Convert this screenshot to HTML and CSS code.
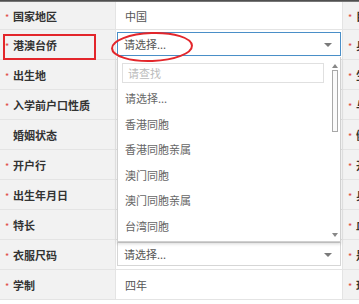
FILE: index.html
```html
<!DOCTYPE html>
<html lang="zh-CN">
<head>
  <meta charset="UTF-8">
  <meta name="viewport" content="width=device-width, initial-scale=1.0">
  <title>学生信息</title>
  <link rel="stylesheet" href="styles.css">
</head>
<body>
  <div class="page">
    <div class="topline"></div>
    <div class="form-table">
      <div class="row">
        <div class="label"><span class="req">*</span>国家地区</div>
        <div class="value">中国</div>
        <div class="label side"><span class="req">*</span>目</div>
      </div>
      <div class="row">
        <div class="label"><span class="req">*</span>港澳台侨</div>
        <div class="value has-select">
          <div class="select open">请选择...<span class="caret"></span></div>
        </div>
        <div class="label side"><span class="req">*</span>身</div>
      </div>
      <div class="row">
        <div class="label"><span class="req">*</span>出生地</div>
        <div class="value"></div>
        <div class="label side"><span class="req">*</span>生</div>
      </div>
      <div class="row">
        <div class="label"><span class="req">*</span>入学前户口性质</div>
        <div class="value"></div>
        <div class="label side"><span class="req">*</span>与</div>
      </div>
      <div class="row">
        <div class="label"><span class="req"></span>婚姻状态</div>
        <div class="value"></div>
        <div class="label side"><span class="req">*</span>健</div>
      </div>
      <div class="row">
        <div class="label"><span class="req">*</span>开户行</div>
        <div class="value"></div>
        <div class="label side"><span class="req">*</span>开</div>
      </div>
      <div class="row">
        <div class="label"><span class="req">*</span>出生年月日</div>
        <div class="value"></div>
        <div class="label side"><span class="req">*</span>身</div>
      </div>
      <div class="row">
        <div class="label"><span class="req">*</span>特长</div>
        <div class="value"></div>
        <div class="label side"><span class="req">*</span>血</div>
      </div>
      <div class="row">
        <div class="label"><span class="req">*</span>衣服尺码</div>
        <div class="value has-select">
          <div class="select">请选择...<span class="caret"></span></div>
        </div>
        <div class="label side"><span class="req">*</span>是</div>
      </div>
      <div class="row">
        <div class="label"><span class="req">*</span>学制</div>
        <div class="value">四年</div>
        <div class="label side"><span class="req">*</span>现</div>
      </div>
    </div>

    <!-- 下拉列表 -->
    <div class="dropdown">
      <div class="dd-main">
        <div class="dd-search">请查找</div>
        <ul class="dd-options">
          <li>请选择...</li>
          <li>香港同胞</li>
          <li>香港同胞亲属</li>
          <li>澳门同胞</li>
          <li>澳门同胞亲属</li>
          <li>台湾同胞</li>
        </ul>
      </div>
      <div class="scrollbar">
        <span class="arrow-up"></span>
        <span class="thumb"></span>
        <span class="arrow-down"></span>
      </div>
    </div>

    <!-- 标注 -->
    <div class="annot-box"></div>
    <svg class="annot-ellipse" width="86" height="34" viewBox="0 0 86 34">
      <ellipse cx="42" cy="17" rx="40" ry="14" fill="none" stroke="#e3262b" stroke-width="2" transform="rotate(-2 42 17)"/>
    </svg>
  </div>
</body>
</html>
```

FILE: styles.css
```css
html, body {
  margin: 0;
  overflow: hidden;
  background: #ffffff;
}

body {
  font-family: "Noto Sans CJK SC", "Noto Sans", sans-serif;
  font-size: 11px;
  color: #555;
}

.page {
  position: relative;
  width: 359px;
  height: 304px;
  overflow: hidden;
}

.topline {
  height: 2px;
  background: linear-gradient(#3c3c3c, #8a8a8a);
}

.row {
  display: grid;
  grid-template-columns: 116px 227px 80px;
  height: 30px;
  box-sizing: border-box;
  border-bottom: 1px solid #e4e4e4;
}

.row:first-child {
  height: 28px;
}

.label {
  display: flex;
  align-items: center;
  padding-left: 5px;
  background: #f2f2f2;
  border-right: 1px solid #e4e4e4;
  font-weight: bold;
  color: #333;
  white-space: nowrap;
}

.label.side {
  border-right: none;
}

.req {
  display: inline-block;
  width: 8px;
  padding-top: 4px;
  color: #e0483e;
  font-weight: normal;
  font-size: 9px;
}

.value {
  display: flex;
  align-items: center;
  padding-left: 9px;
  border-right: 1px solid #e4e4e4;
  color: #555;
}

.value.has-select {
  align-items: flex-start;
  padding: 2px 0 0 1px;
}

.select {
  position: relative;
  display: flex;
  align-items: center;
  width: 224px;
  height: 24px;
  box-sizing: border-box;
  padding-left: 6px;
  border: 1px solid #d6d6d6;
  background: #fff;
  color: #555;
}

.select.open {
  border-color: #4a8fc8;
}

.caret {
  position: absolute;
  right: 8px;
  top: 10px;
  border-left: 4px solid transparent;
  border-right: 4px solid transparent;
  border-top: 4px solid #7a7a7a;
}

.dropdown {
  position: absolute;
  left: 117px;
  top: 57px;
  width: 224px;
  height: 185px;
  box-sizing: border-box;
  display: flex;
  padding: 6px 1px 0 4px;
  background: #fff;
  border: 1px solid #d0d0d0;
  border-top: none;
  box-shadow: 0 2px 3px rgba(0, 0, 0, 0.15);
}

.dd-main {
  flex: 1;
}

.dd-search {
  width: 202px;
  height: 20px;
  box-sizing: border-box;
  padding-left: 5px;
  border: 1px solid #e0e0e0;
  line-height: 18px;
  color: #bbb;
}

.dd-options {
  list-style: none;
  margin: 3px 0 0;
  padding: 0;
}

.dd-options li {
  height: 25.5px;
  line-height: 25.5px;
  padding-left: 3px;
  color: #666;
}

.scrollbar {
  width: 8px;
  display: flex;
  flex-direction: column;
  align-items: center;
  padding-bottom: 4px;
}

.arrow-up {
  margin-top: 1px;
  border-left: 3px solid transparent;
  border-right: 3px solid transparent;
  border-bottom: 4px solid #888;
}

.thumb {
  width: 6px;
  height: 62px;
  margin-top: 2px;
  box-sizing: border-box;
  border: 1px solid #a8a8a8;
  background: #fafafa;
}

.arrow-down {
  margin-top: auto;
  border-left: 3px solid transparent;
  border-right: 3px solid transparent;
  border-top: 4px solid #888;
}

.annot-box {
  position: absolute;
  left: 3px;
  top: 34px;
  width: 93px;
  height: 26px;
  box-sizing: border-box;
  border: 2px solid #e3262b;
}

.annot-ellipse {
  position: absolute;
  left: 110px;
  top: 30px;
}
```
